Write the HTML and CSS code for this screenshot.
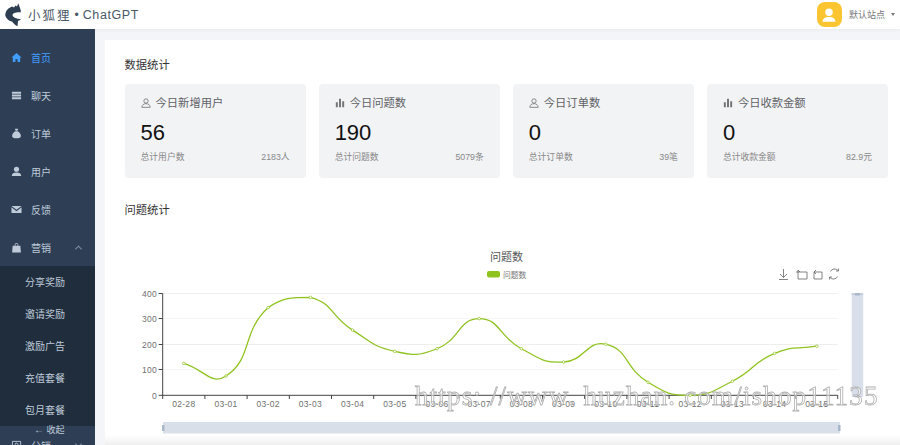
FILE: index.html
```html
<!DOCTYPE html>
<html lang="en">
<head>
    <meta charset="UTF-8">
    <meta name="viewport" content="width=device-width, initial-scale=1.0">
    <title>小狐狸 ChatGPT</title>
    <link rel="stylesheet" href="styles.css">
</head>
<body>
    <svg class="defs" width="0" height="0">
        <symbol id="i-user-line" viewBox="0 0 12 12">
            <circle cx="6" cy="3.6" r="2.6" fill="none" stroke="currentColor"/>
            <path d="M1 11.2c0-2.8 2.2-4.4 5-4.4s5 1.6 5 4.4z" fill="none" stroke="currentColor"/>
        </symbol>
        <symbol id="i-bars" viewBox="0 0 12 12">
            <path d="M1 5h2.4v6H1zM4.8 1h2.4v10H4.8zM8.6 4h2.4v7H8.6z" fill="currentColor"/>
        </symbol>
    </svg>

    <header class="topbar">
        <div class="brand">
            <svg class="fox" viewBox="0 0 16 23">
                <path d="M13.300.3L15.700 7 15.700 9.500C11 9 8 10 7.500 12 7.500 14 11 15.500 16 16.500L13 18 12.500 23.300C10 22 8 20 7 18.500 3.500 18 1 15 .3 12.500 .3 8 3 5 7 3.500L9 4.500 10.500 2.500 12 3.500z" fill="#2d3e50"/>
            </svg>
            <span class="brand-cn">小狐狸</span>
            <span class="brand-dot">•</span>
            <span class="brand-en">ChatGPT</span>
        </div>
        <div class="site">
            <span class="avatar">
                <svg viewBox="0 0 24 24" width="18" height="18">
                    <circle cx="12" cy="8.400" r="5" fill="#fff"/>
                    <path d="M3.500 21c0-4.600 3.600-6.200 8.500-6.200s8.500 1.600 8.500 6.200z" fill="#fff"/>
                </svg>
            </span>
            <span class="site-name">默认站点</span>
            <span class="caret"></span>
        </div>
    </header>

    <div class="layout">
        <aside class="sidebar">
            <ul class="menu">
                <li class="menu-item active">
                    <svg class="menu-icon" viewBox="0 0 12 12"><path d="M6 1l5.500 5H10v5H7.200V7.800H4.800V11H2V6H.5z" fill="currentColor"/></svg>
                    首页
                </li>
                <li class="menu-item">
                    <svg class="menu-icon" viewBox="0 0 12 12"><path d="M1 2h10v2H1zM1 5h10v2H1zM1 8h10v2H1z" fill="currentColor"/></svg>
                    聊天
                </li>
                <li class="menu-item">
                    <svg class="menu-icon" viewBox="0 0 12 12"><path d="M4.200.8h3.600L7 3H5zM4.800 3.600h2.400c2 1 3.600 3 3.600 5 0 1.800-1.600 2.600-4.800 2.600S1.200 10.400 1.200 8.600c0-2 1.600-4 3.600-5z" fill="currentColor"/></svg>
                    订单
                </li>
                <li class="menu-item">
                    <svg class="menu-icon" viewBox="0 0 12 12"><circle cx="6" cy="3.600" r="2.800" fill="currentColor"/><path d="M.8 11c0-2.600 2.200-3.800 5.200-3.800s5.200 1.200 5.200 3.800z" fill="currentColor"/></svg>
                    用户
                </li>
                <li class="menu-item">
                    <svg class="menu-icon" viewBox="0 0 12 12"><path d="M.5 2.200h11L6 6.400zM.5 3.600L6 7.800l5.500-4.200v6.200h-11z" fill="currentColor"/></svg>
                    反馈
                </li>
                <li class="menu-item open">
                    <svg class="menu-icon" viewBox="0 0 12 12"><path d="M4 4V3a2 2 0 0 1 4 0v1h2.200l.6 7.500H1.200L1.800 4zM4.800 4h2.400V3a1.200 1.200 0 0 0-2.400 0z" fill="currentColor"/></svg>
                    营销
                    <span class="chevron up"></span>
                </li>
                <li>
                    <ul class="submenu">
                        <li>分享奖励</li>
                        <li>邀请奖励</li>
                        <li>激励广告</li>
                        <li>充值套餐</li>
                        <li>包月套餐</li>
                    </ul>
                </li>
                <li class="menu-item">
                    <svg class="menu-icon" viewBox="0 0 12 12"><path d="M1.500 1.500h9v7h-9zM3.500 10.500h5" fill="none" stroke="currentColor"/><circle cx="6" cy="5" r="1.600" fill="none" stroke="currentColor"/></svg>
                    分销
                    <span class="chevron down"></span>
                </li>
            </ul>
            <div class="collapse"><span class="collapse-arrow">←</span> 收起</div>
        </aside>

        <main class="main">
            <section class="panel">
                <h2 class="section-title">数据统计</h2>
                <div class="stats">
                    <div class="stat">
                        <div class="stat-title"><svg class="stat-icon"><use href="#i-user-line"/></svg>今日新增用户</div>
                        <div class="stat-value">56</div>
                        <div class="stat-foot"><span>总计用户数</span><span>2183人</span></div>
                    </div>
                    <div class="stat">
                        <div class="stat-title"><svg class="stat-icon"><use href="#i-bars"/></svg>今日问题数</div>
                        <div class="stat-value">190</div>
                        <div class="stat-foot"><span>总计问题数</span><span>5079条</span></div>
                    </div>
                    <div class="stat">
                        <div class="stat-title"><svg class="stat-icon"><use href="#i-user-line"/></svg>今日订单数</div>
                        <div class="stat-value">0</div>
                        <div class="stat-foot"><span>总计订单数</span><span>39笔</span></div>
                    </div>
                    <div class="stat">
                        <div class="stat-title"><svg class="stat-icon"><use href="#i-bars"/></svg>今日收款金额</div>
                        <div class="stat-value">0</div>
                        <div class="stat-foot"><span>总计收款金额</span><span>82.9元</span></div>
                    </div>
                </div>

                <h2 class="section-title second">问题统计</h2>

                <svg class="chart" viewBox="105 240 795 197" width="795" height="197">
                    <text class="chart-title" x="506.500" y="261" text-anchor="middle">问题数</text>
                    <rect x="487" y="271" width="13" height="6.500" rx="2" fill="#8fc31f"/>
                    <text class="legend" x="503" y="277.500">问题数</text>

                    <g class="tools">
                        <path d="M783.500 269v8.500M780 274l3.500 3.500 3.500-3.500M779 279.500h9"/>
                        <path d="M798 270v9h9v-7h-7M796 272h4M798 270l2 2"/>
                        <path d="M814 272h8v7h-8zM814 272l2-2M814 272l2 2"/>
                        <path d="M838 270.500a4.500 4.500 0 0 0-7.500 1M830 277.500a4.500 4.500 0 0 0 7.500-1M838.500 268.500v2.500H836M829.500 279.500V277H832"/>
                    </g>

                    <g class="split">
                        <path d="M162.700 293.500H837.700"/>
                        <path d="M162.700 318.500H837.700" class="light"/>
                        <path d="M162.700 344.500H837.700"/>
                        <path d="M162.700 369.500H837.700" class="light"/>
                    </g>

                    <path class="axis" d="M162.700 293.500V395.300M158.700 293.500h4M158.700 318.500h4M158.700 344.500h4M158.700 369.500h4M158.700 395.300H837.700"/>
                    <path class="axis" d="M162.700 395v4M204.900 395v4M247.100 395v4M289.300 395v4M331.500 395v4M373.700 395v4M415.900 395v4M458.100 395v4M500.300 395v4M542.500 395v4M584.700 395v4M626.900 395v4M669.100 395v4M711.300 395v4M753.500 395v4M795.700 395v4M837.700 395v4"/>

                    <g class="axis-label" text-anchor="end">
                        <text x="157" y="296.500">400</text>
                        <text x="157" y="321.500">300</text>
                        <text x="157" y="347.500">200</text>
                        <text x="157" y="372.500">100</text>
                        <text x="157" y="398.500">0</text>
                    </g>
                    <g class="axis-label" text-anchor="middle">
                        <text x="183.800" y="407">02-28</text>
                        <text x="226" y="407">03-01</text>
                        <text x="268.200" y="407">03-02</text>
                        <text x="310.400" y="407">03-03</text>
                        <text x="352.600" y="407">03-04</text>
                        <text x="394.800" y="407">03-05</text>
                        <text x="437" y="407">03-06</text>
                        <text x="479.200" y="407">03-07</text>
                        <text x="521.400" y="407">03-08</text>
                        <text x="563.600" y="407">03-09</text>
                        <text x="605.800" y="407">03-10</text>
                        <text x="648" y="407">03-11</text>
                        <text x="690.200" y="407">03-12</text>
                        <text x="732.400" y="407">03-13</text>
                        <text x="774.600" y="407">03-14</text>
                        <text x="816.800" y="407">03-15</text>
                    </g>

                    <path id="line" class="line"/>
                    <g id="points" class="points"></g>

                    <rect x="851.700" y="293.500" width="11.500" height="103.500" fill="#d8dfea"/>
                    <path d="M851.700 294h11.500" stroke="#a9b7cc" stroke-width="1"/>
                    <rect x="855" y="293" width="5" height="2.500" fill="#a9b7cc"/>
                    <rect x="855" y="395" width="5" height="2.500" fill="#c3cddd"/>

                    <rect x="163" y="422" width="677" height="11.500" fill="#d9dfe9"/>
                    <rect x="162" y="425" width="2.500" height="6" fill="#a9b7cc"/>
                    <rect x="838" y="425" width="2.500" height="6" fill="#a9b7cc"/>
                </svg>
                <div class="fade"></div>
            </section>
        </main>
    </div>

    <div class="watermark">https: //www. huzhan. com/ishop11135</div>

    <script src="chart.js"></script>
</body>
</html>
```

FILE: styles.css
```css
* {
    box-sizing: border-box;
}
html, body {
    margin: 0;
    height: 100%;
    overflow: hidden;
}
body {
    position: relative;
    font-family: "Liberation Sans", "Noto Sans CJK SC", sans-serif;
    background-color: #f4f5f8;
    color: #333;
}
ul {
    list-style: none;
    margin: 0;
    padding: 0;
}
.defs {
    position: absolute;
}

/* top bar */
.topbar {
    height: 29px;
    background-color: #fff;
    display: flex;
    align-items: center;
    justify-content: space-between;
    padding: 0 5px;
    box-shadow: 0 1px 3px rgba(0,0,0,0.05);
    position: relative;
}
.brand {
    display: flex;
    align-items: center;
    color: #4a5866;
}
.fox {
    width: 16px;
    height: 23px;
}
.brand-cn {
    margin-left: 7px;
    font-size: 12.500px;
    letter-spacing: 2px;
}
.brand-dot {
    margin-left: 3px;
    font-size: 12px;
}
.brand-en {
    margin-left: 4px;
    font-size: 12.500px;
    letter-spacing: 0.6px;
}
.site {
    display: flex;
    align-items: center;
}
.avatar {
    width: 25px;
    height: 25px;
    border-radius: 8px;
    background-color: #fbc531;
    display: flex;
    align-items: center;
    justify-content: center;
}
.site-name {
    margin-left: 7px;
    font-size: 9px;
    color: #777;
}
.caret {
    margin-left: 6px;
    border-top: 3px solid #777;
    border-left: 2.500px solid transparent;
    border-right: 2.500px solid transparent;
}

.layout {
    display: flex;
    height: 416px;
}

/* sidebar */
.sidebar {
    width: 95px;
    flex: none;
    background-color: #2e3f55;
    padding-top: 9px;
    position: relative;
    overflow: hidden;
}
.menu-item {
    height: 38.200px;
    display: flex;
    align-items: center;
    padding-left: 11px;
    font-size: 10px;
    color: #bfcbd9;
    position: relative;
}
.menu-item.active {
    color: #409eff;
}
.menu-item.open {
    height: 37.200px;
}
.menu-icon {
    width: 11px;
    height: 11px;
    margin-right: 9px;
}
.chevron {
    position: absolute;
    right: 14px;
    top: 50%;
    width: 5px;
    height: 5px;
    border-left: 1px solid #7f8da0;
    border-top: 1px solid #7f8da0;
}
.chevron.up {
    transform: translateY(-30%) rotate(45deg);
}
.chevron.down {
    transform: translateY(-70%) rotate(225deg);
}
.submenu {
    background-color: #1f2d3d;
}
.submenu li {
    height: 32px;
    line-height: 32px;
    padding: 1px 0 0 25px;
    font-size: 10px;
    color: #bfcbd9;
}
.collapse {
    position: absolute;
    left: 34px;
    top: 393px;
    font-size: 9px;
    line-height: 16px;
    color: #bfcbd9;
}
.collapse-arrow {
    font-size: 10px;
}

/* main */
.main {
    flex: 1;
    min-width: 0;
    padding: 11px 0 0 10px;
}
.panel {
    height: 405px;
    background-color: #fff;
    padding: 17px 12px 0 19.500px;
    position: relative;
    overflow: hidden;
}
.section-title {
    margin: 0;
    font-size: 11.300px;
    line-height: 16px;
    font-weight: normal;
    color: #333;
}
.section-title.second {
    margin-top: 24px;
}
.stats {
    display: grid;
    grid-template-columns: repeat(4, 1fr);
    gap: 13px;
    margin-top: 11px;
}
.stat {
    height: 94px;
    background-color: #f2f3f5;
    border-radius: 4px;
    padding: 11px 16px 0;
}
.stat-title {
    display: flex;
    align-items: center;
    font-size: 11.300px;
    line-height: 16px;
    color: #606266;
}
.stat-icon {
    width: 10px;
    height: 10px;
    margin-right: 5px;
    color: #777;
}
.stat-value {
    margin-top: 9px;
    font-size: 22px;
    line-height: 26px;
    color: #111;
}
.stat-foot {
    margin-top: 4px;
    display: flex;
    justify-content: space-between;
    font-size: 8.800px;
    line-height: 14px;
    color: #888;
}

/* chart */
.chart {
    display: block;
    margin: 22px 0 0 -19.500px;
}
.chart-title {
    font-size: 11px;
    fill: #555;
}
.legend {
    font-size: 7.800px;
    fill: #777;
}
.tools path {
    fill: none;
    stroke: #666;
    stroke-width: 0.800;
}
.split path {
    fill: none;
    stroke: #eee;
    stroke-width: 1;
}
.split path.light {
    stroke: #f5f5f5;
}
.axis {
    fill: none;
    stroke: #444;
    stroke-width: 1;
}
.axis-label {
    font-size: 8.500px;
    letter-spacing: 0.300px;
    fill: #707070;
}
.line {
    fill: none;
    stroke: #8fc31f;
    stroke-width: 1.300;
}
.points circle {
    fill: #fff;
    stroke: #8fc31f;
    stroke-width: 0.700;
}
.fade {
    position: absolute;
    left: 0;
    right: 0;
    bottom: 0;
    height: 10px;
    background: linear-gradient(#fff, #efefef);
}

/* watermark sits over the page */
.watermark {
    position: absolute;
    left: 415px;
    top: 381px;
    font-family: "Liberation Serif", serif;
    font-size: 27px;
    letter-spacing: 1.170px;
    white-space: nowrap;
    color: rgba(255,255,255,0.5);
    -webkit-text-stroke: 0.800px #b0b0b0;
    will-change: transform;
}
```

FILE: chart.js
```js
// same smoothing as an echarts line: control points follow the neighbours
// and stay inside the box of the data
var values = [125, 75.5, 343, 383, 255, 172, 182, 300, 182, 130, 200, 51, 0, 55, 164, 192];
var smooth = 0.5;

var pts = values.map(function (v, i) {
    return [183.8 + i * 42.2, 395.3 - v * 0.2557];
});
var minY = 395.3 - 383 * 0.2557;
var maxY = 395.3;

function dist(a, b) {
    return Math.hypot(a[0] - b[0], a[1] - b[1]);
}

function clamp(x, y) {
    return x + " " + Math.min(maxY, Math.max(minY, y));
}

function controls(i) {
    var p = pts[i];
    var prev = pts[i - 1] || p;
    var next = pts[i + 1] || p;
    var d0 = dist(p, prev);
    var d1 = dist(p, next);
    var sum = d0 + d1 || 1;
    var vx = next[0] - prev[0];
    var vy = next[1] - prev[1];
    return {
        before: clamp(p[0] - vx * smooth * d0 / sum, p[1] - vy * smooth * d0 / sum),
        after: clamp(p[0] + vx * smooth * d1 / sum, p[1] + vy * smooth * d1 / sum)
    };
}

var d = "M" + pts[0].join(" ");
for (var i = 1; i < pts.length; i++) {
    d += " C" + controls(i - 1).after + " " + controls(i).before + " " + pts[i].join(" ");
}
document.getElementById("line").setAttribute("d", d);

var group = document.getElementById("points");
pts.forEach(function (p) {
    var c = document.createElementNS("http://www.w3.org/2000/svg", "circle");
    c.setAttribute("cx", p[0]);
    c.setAttribute("cy", p[1]);
    c.setAttribute("r", 1.3);
    group.appendChild(c);
});
```
